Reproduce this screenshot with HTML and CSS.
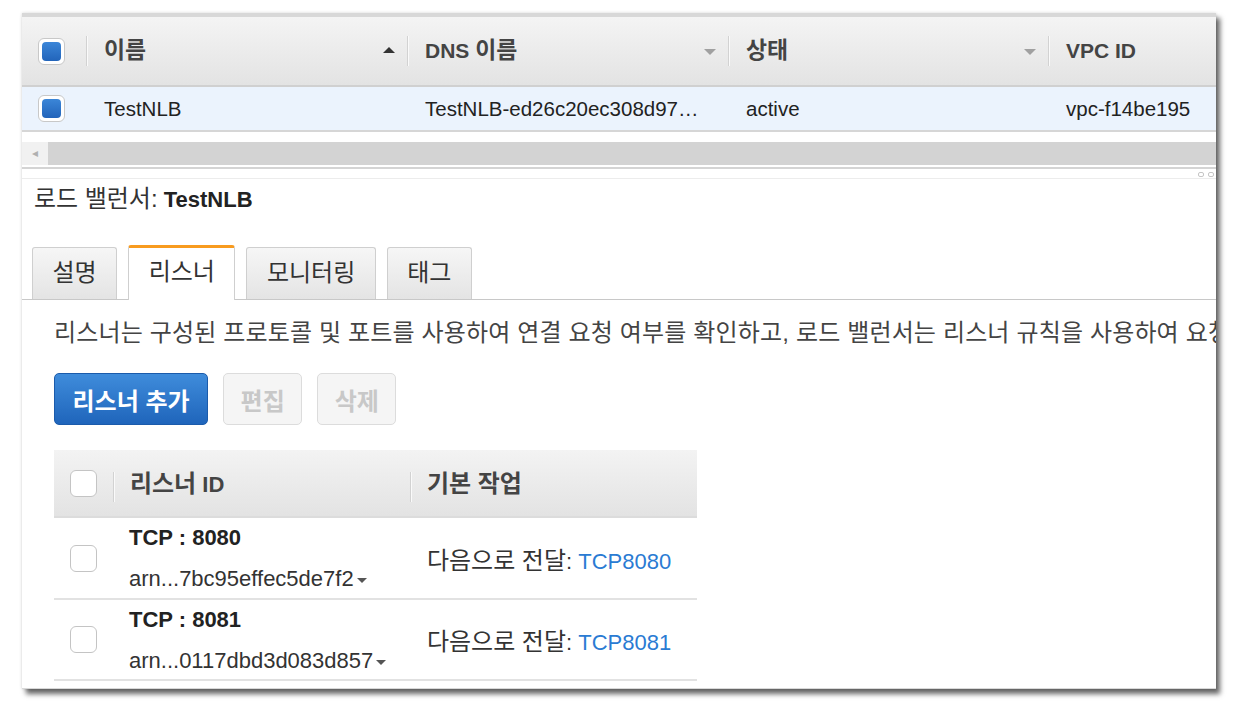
FILE: index.html
```html
<!DOCTYPE html>
<html lang="ko">
<head>
    <meta charset="UTF-8">
    <title>로드 밸런서 - 리스너</title>
    <link rel="stylesheet" href="styles.css">
</head>
<body>
    <div class="frame">
        <!-- Load balancer list -->
        <div class="lb-grid">
            <div class="lb-head">
                <div class="cell check"><span class="cb cb-on"><span></span></span></div>
                <div class="cell"><span class="sep"></span><span class="label"><span class="ko">이름</span></span><span class="sort up"></span></div>
                <div class="cell"><span class="sep"></span><span class="label">DNS <span class="ko">이름</span></span><span class="sort"></span></div>
                <div class="cell"><span class="sep"></span><span class="label"><span class="ko">상태</span></span><span class="sort"></span></div>
                <div class="cell"><span class="sep"></span><span class="label">VPC ID</span></div>
            </div>
            <div class="lb-row">
                <div class="cell check"><span class="cb cb-on"><span></span></span></div>
                <div class="cell">TestNLB</div>
                <div class="cell">TestNLB-ed26c20ec308d97…</div>
                <div class="cell">active</div>
                <div class="cell">vpc-f14be195</div>
            </div>
        </div>

        <div class="hscroll">
            <div class="hscroll-btn">&#9666;</div>
            <div class="hscroll-thumb"></div>
        </div>
        <div class="splitter"><span class="grip"></span><span class="grip"></span></div>

        <!-- Details -->
        <div class="details">
            <h2 class="details-title"><span class="ko">로드 밸런서:</span> <b>TestNLB</b></h2>

            <ul class="tabs">
                <li>설명</li>
                <li class="active">리스너</li>
                <li>모니터링</li>
                <li>태그</li>
            </ul>

            <div class="tab-body">
                <p class="intro">리스너는 구성된 프로토콜 및 포트를 사용하여 연결 요청 여부를 확인하고, 로드 밸런서는 리스너 규칙을 사용하여 요청을 하나 이상의 대상 그룹으로 라우팅하는 방법을 결정합니다.</p>

                <div class="actions">
                    <button class="btn btn-primary">리스너 추가</button>
                    <button class="btn" disabled>편집</button>
                    <button class="btn" disabled>삭제</button>
                </div>

                <table class="listeners">
                    <thead>
                        <tr>
                            <th class="col-check"><span class="cb"></span></th>
                            <th class="col-id"><span class="sep"></span><span class="ko">리스너</span> ID</th>
                            <th class="col-action"><span class="sep"></span><span class="ko">기본 작업</span></th>
                        </tr>
                    </thead>
                    <tbody>
                        <tr>
                            <td class="col-check"><span class="cb"></span></td>
                            <td class="col-id">
                                <div class="port">TCP : 8080</div>
                                <div class="arn">arn...7bc95effec5de7f2 <span class="caret"></span></div>
                            </td>
                            <td class="col-action"><span class="ko">다음으로 전달</span>: <a href="#">TCP8080</a></td>
                        </tr>
                        <tr>
                            <td class="col-check"><span class="cb"></span></td>
                            <td class="col-id">
                                <div class="port">TCP : 8081</div>
                                <div class="arn">arn...0117dbd3d083d857 <span class="caret"></span></div>
                            </td>
                            <td class="col-action"><span class="ko">다음으로 전달</span>: <a href="#">TCP8081</a></td>
                        </tr>
                    </tbody>
                </table>
            </div>
        </div>
    </div>
</body>
</html>
```

FILE: styles.css
```css
/* Reset */
* {
    margin: 0;
    padding: 0;
    box-sizing: border-box;
}

html,
body {
    height: 100%;
}

body {
    padding: 13px 0 0 22px;
    background: #fff;
    font-family: "Liberation Sans", "Noto Sans CJK KR", sans-serif;
    font-size: 20.5px;
    color: #222;
    overflow: hidden;
}

/* Hangul runs a touch larger than the Latin text around them */
.ko {
    font-size: 1.09em;
}

/* Window frame */
.frame {
    width: 1194px;
    height: 676px;
    background: #fff;
    overflow: hidden;
    border-bottom: 1px solid #d8d8d8;
    box-shadow: 4px 5px 5px rgba(0, 0, 0, 0.6), 0 0 3px rgba(0, 0, 0, 0.15);
}

/* Load balancer grid */
.lb-grid {
    border-top: 4px solid #d8d8d8;
}

.lb-head,
.lb-row {
    display: grid;
    grid-template-columns: 64px 321px 321px 320px 1fr;
}

.lb-head {
    height: 70px;
    background: linear-gradient(#f4f4f4, #e3e3e3);
    border-bottom: 2px solid #d0d0d0;
    font-size: 21px;
    font-weight: bold;
    color: #444;
}

.lb-head .cell {
    display: flex;
    align-items: center;
    padding-right: 12px;
}

.lb-head .label {
    flex: 1;
    margin-left: 16px;
    margin-top: -1px;
    line-height: 26px;
    white-space: nowrap;
}

.sep {
    display: inline-block;
    width: 2px;
    height: 30px;
    background: linear-gradient(to right, #d2d2d2 50%, #fafafa 50%);
}

.sort {
    width: 0;
    height: 0;
    border-left: 6px solid transparent;
    border-right: 6px solid transparent;
    border-top: 6px solid #a0a0a0;
    margin-top: 2px;
}

.sort.up {
    border-top: none;
    border-bottom: 6px solid #333;
    margin-top: -2px;
}

.lb-row {
    height: 45px;
    background: #ebf3fd;
    border-bottom: 2px solid #d6d6d6;
}

.lb-row .cell {
    display: flex;
    align-items: center;
    padding-left: 18px;
    white-space: nowrap;
    overflow: hidden;
}

.lb-head .cell.check,
.lb-row .cell.check {
    padding-left: 16px;
    padding-right: 0;
}

/* Checkboxes */
.cb {
    display: inline-block;
    width: 27px;
    height: 27px;
    border: 1px solid #c4c4c4;
    border-radius: 6px;
    background: #fff;
    vertical-align: middle;
}

.cb-on {
    padding: 3px;
    border-color: #c8c8c8;
}

.cb-on span {
    display: block;
    width: 100%;
    height: 100%;
    border-radius: 4px;
    background: linear-gradient(#3b86d8, #2264ba);
}

/* Horizontal scrollbar */
.hscroll {
    display: flex;
    height: 23px;
    margin-top: 10px;
    background: #d3d3d3;
}

.hscroll-btn {
    width: 26px;
    background: #f1f1f1;
    color: #b0b0b0;
    font-size: 12px;
    line-height: 23px;
    text-align: center;
}

.hscroll-thumb {
    flex: 1;
}

.splitter {
    display: flex;
    justify-content: flex-end;
    gap: 4px;
    height: 12px;
    margin-top: 2px;
    padding-right: 2px;
    border-top: 2px solid #d4d4d4;
    border-bottom: 1px solid #ececec;
}

.grip {
    width: 6px;
    height: 5px;
    margin-top: 3px;
    border: 1px solid #c6c6c6;
    border-radius: 2px;
}

/* Details */
.details {
    font-size: 22px;
}

.details-title {
    padding: 8px 0 0 12px;
    font-size: 22px;
    line-height: 24px;
    font-weight: normal;
    color: #333;
}

.details-title b {
    color: #222;
}

.tabs {
    list-style: none;
    display: flex;
    align-items: flex-end;
    gap: 11px;
    height: 54px;
    margin-top: 34px;
    padding-left: 10px;
    border-bottom: 1px solid #c8c8c8;
}

.tabs li {
    height: 52px;
    padding: 0 19.5px;
    font-size: 24px;
    line-height: 50px;
    color: #333;
    background: linear-gradient(#f6f6f6, #e4e4e4);
    border: 1px solid #cfcfcf;
    border-bottom: none;
    border-radius: 3px 3px 0 0;
}

.tabs li.active {
    height: 55px;
    margin-bottom: -1px;
    background: #fff;
    border-top: 3px solid #f89b1f;
    line-height: 48px;
}

.tab-body {
    padding-left: 32px;
}

.intro {
    margin-top: 21px;
    font-size: 24px;
    line-height: 24px;
    color: #444;
    white-space: nowrap;
    letter-spacing: 0.15px;
}

.actions {
    display: flex;
    gap: 15px;
    margin-top: 28px;
}

.btn {
    height: 52px;
    padding: 0 16.5px;
    font-family: inherit;
    font-size: 24px;
    font-weight: bold;
    color: #c8c8c8;
    background: #f5f5f5;
    border: 1px solid #dcdcdc;
    border-radius: 5px;
}

.btn-primary {
    padding: 0 17.5px;
    color: #fff;
    background: linear-gradient(#3f8cdb, #1f65bb);
    border-color: #1b5bab;
}

/* Listener table */
.listeners {
    width: 643px;
    margin-top: 25px;
    border-collapse: collapse;
    table-layout: fixed;
}

.listeners th {
    height: 67px;
    text-align: left;
    font-weight: bold;
    color: #444;
    background: linear-gradient(#f3f3f3, #e3e3e3);
    border-bottom: 2px solid #dcdcdc;
    white-space: nowrap;
}

.listeners th .sep {
    vertical-align: middle;
    margin-right: 15px;
}

.listeners td {
    height: 82px;
    border-bottom: 2px solid #e2e2e2;
    vertical-align: middle;
    color: #333;
}

.listeners tr:last-child td {
    height: 81px;
}

.col-check {
    width: 59px;
    padding-left: 16px;
}

.col-id {
    width: 297px;
}

.listeners td.col-id {
    padding-left: 16px;
    vertical-align: top;
}

.listeners td.col-action {
    padding-left: 17px;
    white-space: nowrap;
}

.port {
    margin-top: 8px;
    line-height: 24px;
    font-weight: bold;
    color: #222;
}

.arn {
    margin-top: 17px;
    line-height: 24px;
    color: #333;
    white-space: nowrap;
}

.caret {
    display: inline-block;
    width: 0;
    height: 0;
    margin-left: -3px;
    vertical-align: middle;
    border-left: 5px solid transparent;
    border-right: 5px solid transparent;
    border-top: 5px solid #555;
}

.listeners a {
    color: #2a7bd3;
    text-decoration: none;
}
```
